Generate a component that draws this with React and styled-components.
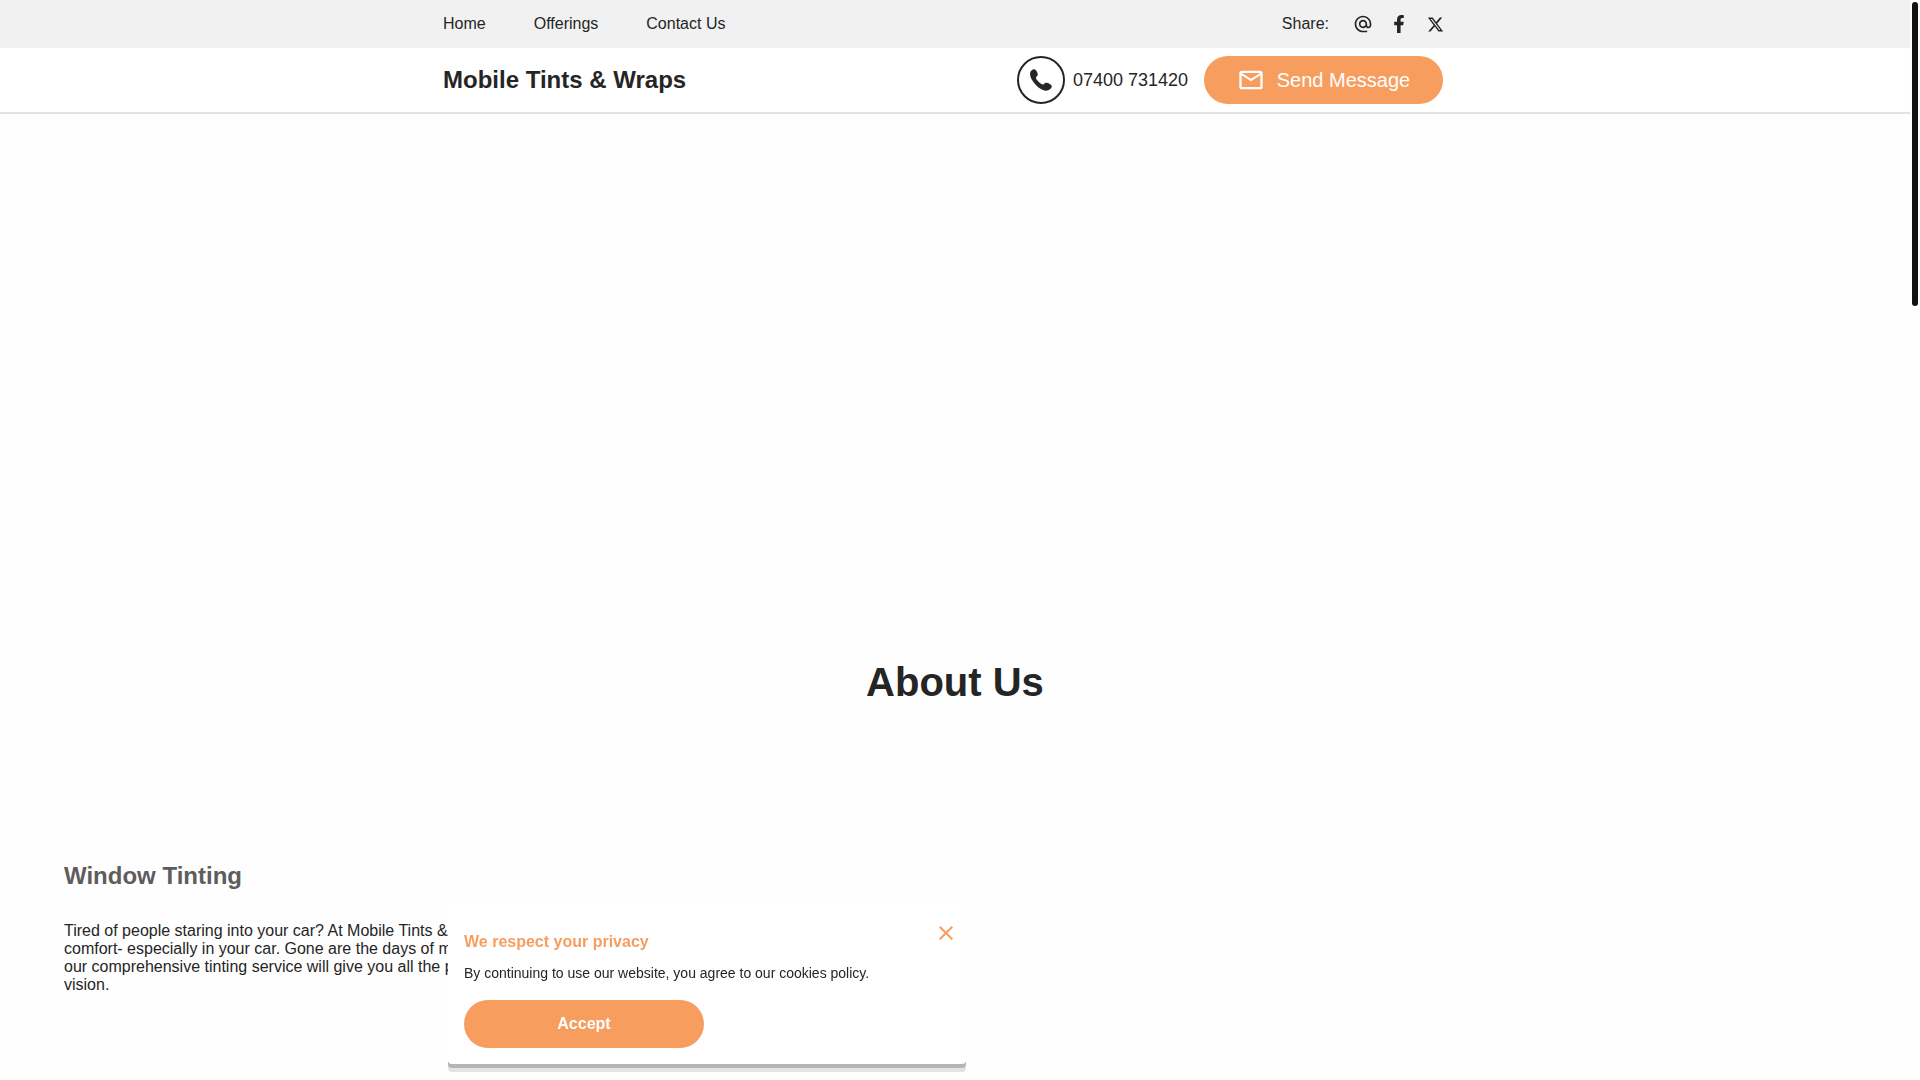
import React, { useState } from 'react';
import styled, { createGlobalStyle } from 'styled-components';
import { MdAlternateEmail, MdOutlineEmail, MdClose } from 'react-icons/md';
import { FaFacebookF } from 'react-icons/fa';
import { FaXTwitter } from 'react-icons/fa6';

const GlobalStyle = createGlobalStyle`
  * {
    box-sizing: border-box;
  }

  body {
    margin: 0;
    background: #fefefe;
    color: #252525;
    font-family: 'Liberation Sans', Arial, sans-serif;
    font-size: 16px;
    overflow: hidden;
  }

  h1, h2, h3, p, ul {
    margin: 0;
    padding: 0;
  }

  a {
    color: inherit;
    text-decoration: none;
  }

  button {
    border: 0;
    font-family: inherit;
    cursor: pointer;
  }
`;

const Page = styled.div`
  padding-right: 10px;
`;

const TopBar = styled.div`
  padding-right: 24px;
  background: #f1f1f1;
`;

const Inner = styled.div`
  display: flex;
  align-items: center;
  justify-content: space-between;
  max-width: 1000px;
  height: ${(props) => props.$height}px;
  margin: 0 auto;
`;

const Nav = styled.nav`
  display: flex;
  gap: 48px;
`;

const Share = styled.div`
  display: flex;
  align-items: center;
  gap: 20px;
`;

const ShareLabel = styled.span`
  margin-right: 6px;
`;

const ShareLink = styled.a`
  display: flex;
  justify-content: center;
  width: 16px;

  svg {
    flex-shrink: 0;
  }
`;

const Header = styled.header`
  padding-right: 24px;
  background: #fff;
  border-bottom: 2px solid #e3e3e3;
`;

const Brand = styled.h1`
  font-size: 24px;
`;

const Actions = styled.div`
  display: flex;
  align-items: center;
  gap: 16px;
`;

const Phone = styled.a`
  display: flex;
  align-items: center;
  gap: 8px;
  font-size: 18px;
`;

const PhoneCircle = styled.span`
  display: flex;
  align-items: center;
  justify-content: center;
  width: 48px;
  height: 48px;
  border: 2px solid #252525;
  border-radius: 50%;
`;

const PillButton = styled.button`
  display: flex;
  align-items: center;
  justify-content: center;
  gap: 12px;
  width: ${(props) => (props.$large ? 239 : 240)}px;
  height: 48px;
  border-radius: 24px;
  background: #f79e5f;
  color: #fff;
  font-size: ${(props) => (props.$large ? 20 : 16)}px;
  font-weight: ${(props) => (props.$large ? 400 : 700)};
`;

const Hero = styled.section`
  height: 504px;
`;

const SectionTitle = styled.h2`
  padding: 40px 0 140px;
  font-size: 40px;
  line-height: 48px;
  text-align: center;
`;

const Columns = styled.section`
  display: grid;
  grid-template-columns: 1fr 1fr;
  gap: 128px;
  padding: 16px 64px;
`;

const ColumnTitle = styled.h3`
  margin-bottom: 32px;
  color: #605c5c;
  font-size: 24px;
  line-height: 28px;
`;

const Text = styled.p`
  line-height: 18px;
`;

const CookieNotice = styled.aside`
  position: fixed;
  bottom: 16px;
  left: 448px;
  width: 518px;
  padding: 16px;
  background: #fff;
  border-radius: 4px;
  box-shadow: 0 4px 0 #b5b5b5, 0 8px 0 #e3e3e3;
`;

const CookieTitle = styled.h2`
  padding-top: 16px;
  color: #f79e5f;
  font-size: 16px;
  line-height: 18px;
`;

const CookieText = styled.p`
  margin: 13px 0 18px;
  font-size: 14px;
  line-height: 18px;
`;

const CloseButton = styled.button`
  position: absolute;
  top: 20px;
  right: 8px;
  display: flex;
  padding: 0;
  background: none;
  color: #f79e5f;
`;

const ScrollThumb = styled.div`
  position: fixed;
  top: 2px;
  right: 2px;
  width: 6px;
  height: 304px;
  border-radius: 3px;
  background: #111;
`;

function PhoneIcon() {
  return (
    <svg width="22" height="22" viewBox="0 0 22 22" fill="currentColor" aria-hidden="true">
      <path d="M1 1.9C2 .9 3 .2 4 .2c1.300 0 2.200 1.100 2.900 2.600.7 1.300 1 2.400.7 3.500-.3 1-1.400 1.400-1.600 2.100-.3 1 .7 2.500 2.600 4.300s3.600 3 4.700 2.800c.9-.2 1.300-1.500 2.300-1.700 1.200-.3 2.500.1 3.900 1 1.500.9 2.400 1.700 2.300 2.800-.1 1.100-1 2-2.100 2.900-1.700 1.400-4.200 1.600-7.300.2-2.500-1.100-5.200-3.200-7.600-6C1.900 11.400.3 8.500.1 5.800 0 4.100.2 2.700 1 1.900z" />
    </svg>
  );
}

export default function App() {
  const [showCookies, setShowCookies] = useState(true);

  const hideCookies = () => {
    setShowCookies(false);
  };

  return (
    <>
      <GlobalStyle />
      <Page>
        <TopBar>
          <Inner $height={48}>
            <Nav>
              <a href="#home">Home</a>
              <a href="#offerings">Offerings</a>
              <a href="#contact">Contact Us</a>
            </Nav>
            <Share>
              <ShareLabel>Share:</ShareLabel>
              <ShareLink href="#email" aria-label="Share by email">
                <MdAlternateEmail size={20} />
              </ShareLink>
              <ShareLink href="#facebook" aria-label="Share on Facebook">
                <FaFacebookF size={18} />
              </ShareLink>
              <ShareLink href="#x" aria-label="Share on X">
                <FaXTwitter size={17} />
              </ShareLink>
            </Share>
          </Inner>
        </TopBar>
        <Header>
          <Inner $height={64}>
            <Brand>Mobile Tints &amp; Wraps</Brand>
            <Actions>
              <Phone href="tel:07400731420">
                <PhoneCircle>
                  <PhoneIcon />
                </PhoneCircle>
                07400 731420
              </Phone>
              <PillButton $large>
                <MdOutlineEmail size={28} />
                Send Message
              </PillButton>
            </Actions>
          </Inner>
        </Header>
        <main>
          <Hero id="home" />
          <SectionTitle>About Us</SectionTitle>
          <Columns id="offerings">
            <div>
              <ColumnTitle>Window Tinting</ColumnTitle>
              <Text>
                Tired of people staring into your car? At Mobile Tints &amp; Wraps, we fully
                understand the importance of privacy and comfort- especially in your car.
                Gone are the days of making do with prying eyes peering through your windows,
                as our comprehensive tinting service will give you all the privacy you could
                ever need without obstructing any of your vision.
              </Text>
            </div>
          </Columns>
        </main>
      </Page>
      {showCookies && (
        <CookieNotice aria-label="Cookies">
          <CloseButton aria-label="Close" onClick={hideCookies}>
            <MdClose size={24} />
          </CloseButton>
          <CookieTitle>We respect your privacy</CookieTitle>
          <CookieText>
            By continuing to use our website, you agree to our cookies policy.
          </CookieText>
          <PillButton onClick={hideCookies}>Accept</PillButton>
        </CookieNotice>
      )}
      <ScrollThumb />
    </>
  );
}
